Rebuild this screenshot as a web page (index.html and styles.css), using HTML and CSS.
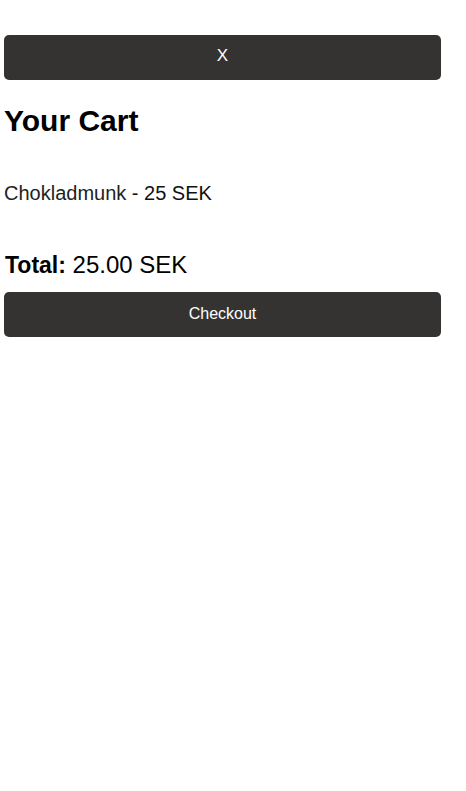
FILE: index.html
```html
<!DOCTYPE html>
<html lang="en">
<head>
<meta charset="utf-8">
<title>Your Cart</title>
<link rel="stylesheet" href="styles.css">
</head>
<body>
<div class="cart">
  <button class="btn btn-close">X</button>
  <h2 class="cart-title">Your Cart</h2>
  <ul class="cart-items">
    <li class="cart-item"><span class="item-name">Chokladmunk</span> - 25 SEK</li>
  </ul>
  <p class="cart-total"><strong>Total:</strong> 25.00 SEK</p>
  <button class="btn btn-checkout">Checkout</button>
</div>
</body>
</html>
```
FILE: styles.css
```css
* { box-sizing: border-box; }
html, body { margin: 0; padding: 0; background: #ffffff; }
body { font-family: "Liberation Sans", Arial, sans-serif; color: #000; }
.cart {
  width: 437px;
  margin-left: 4px;
  padding-top: 35px;
  display: flex;
  flex-direction: column;
}
.btn {
  display: block;
  width: 100%;
  height: 45px;
  border: none;
  border-radius: 5px;
  background: #353332;
  color: #ffffff;
  font-family: "Liberation Sans", Arial, sans-serif;
  font-size: 16px;
  padding: 0;
}
.btn-close { font-size: 17px; padding-bottom: 3px; }
.btn-checkout { padding-bottom: 1px; }
.cart-title {
  margin: 24px 0 0;
  font-size: 30px;
  font-weight: bold;
  line-height: 34px;
}
.cart-items {
  list-style: none;
  margin: 43px 0 0;
  padding: 0;
}
.cart-item {
  font-size: 20px;
  line-height: 24px;
  color: #111;
}
.item-name { color: #222; }
.cart-total {
  margin: 47px 0 0;
  font-size: 24px;
  line-height: 26px;
  padding-left: 1px;
}
.cart-total strong { font-size: 23px; }
.btn-checkout { margin-top: 14px; }
```
